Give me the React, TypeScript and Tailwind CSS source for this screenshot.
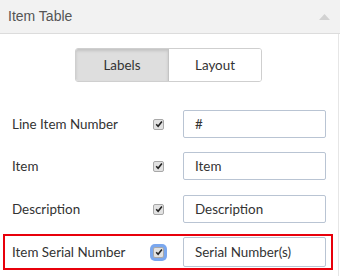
import React from "react";

function Check({ focus }: { focus?: boolean }) {
  return (
    <span
      className={
        "flex h-[11px] w-[11px] items-center justify-center rounded-[2px] border border-[#a8a8a8] bg-[#e2e2e2] " +
        (focus ? "ring-[3px] ring-[#7aa7ee]" : "")
      }
    >
      <svg width="8" height="8" viewBox="0 0 8 8">
        <path d="M1.2 4.3 L3.1 6.2 L6.9 1.4" fill="none" stroke="#222" strokeWidth="1.6" />
      </svg>
    </span>
  );
}

function Row({ label, value, focus, tall }: { label: string; value: string; focus?: boolean; tall?: boolean }) {
  return (
    <div className={"flex items-center " + (tall ? "h-[30px]" : "h-[28px]")}>
      <div className="w-[141px] text-[13.4px] text-[#333]">{label}</div>
      <Check focus={focus} />
      <div
        className={
          "ml-[19px] flex w-[143px] items-center rounded-[2px] border border-[#b9c4d3] px-[11px] text-[13.4px] text-[#333] " +
          (tall ? "h-[30px]" : "h-[28px]")
        }
      >
        {value}
      </div>
    </div>
  );
}

export default function App() {
  return (
    <div className="h-[276px] w-[340px] bg-white" style={{ fontFamily: "Lato, 'Liberation Sans', sans-serif" }}>
      <div className="flex h-[34px] items-center justify-between border-b border-[#dcdcdc] bg-[#f2f2f2] pl-[8px] pr-[10px]">
        <span className="text-[14px] text-[#555]" style={{ fontFamily: "'Liberation Sans', Arial, sans-serif" }}>
          Item Table
        </span>
        <svg width="11" height="6" viewBox="0 0 11 6">
          <path d="M0 6 L5.5 0 L11 6 Z" fill="#d2d2d2" />
        </svg>
      </div>
      <div className="h-[242px] w-[339px] border-r border-[#e6e6e6]">
        <div className="flex pl-[75px] pt-[14px]">
          <div className="flex h-[34px] w-[187px] overflow-hidden rounded-[3px] border border-[#cfcfcf] text-[13.4px] text-[#333]">
            <div className="flex w-[93px] items-center justify-center border-r border-[#c4c4c4] bg-[#dedede] shadow-[inset_0_2px_3px_rgba(0,0,0,0.12)]">
              Labels
            </div>
            <div className="flex flex-1 items-center justify-center bg-white">Layout</div>
          </div>
        </div>
        <div className="flex flex-col pl-[12px] pt-[28px]">
          <Row label="Line Item Number" value="#" />
          <div className="h-[14px]" />
          <Row label="Item" value="Item" />
          <div className="h-[15px]" />
          <Row label="Description" value="Description" />
        </div>
        <div className="ml-[3px] mt-[11px] w-[330px] border-2 border-[#e8000b] py-[1px] pl-[7px]">
          <Row label="Item Serial Number" value="Serial Number(s)" focus tall />
        </div>
      </div>
    </div>
  );
}
